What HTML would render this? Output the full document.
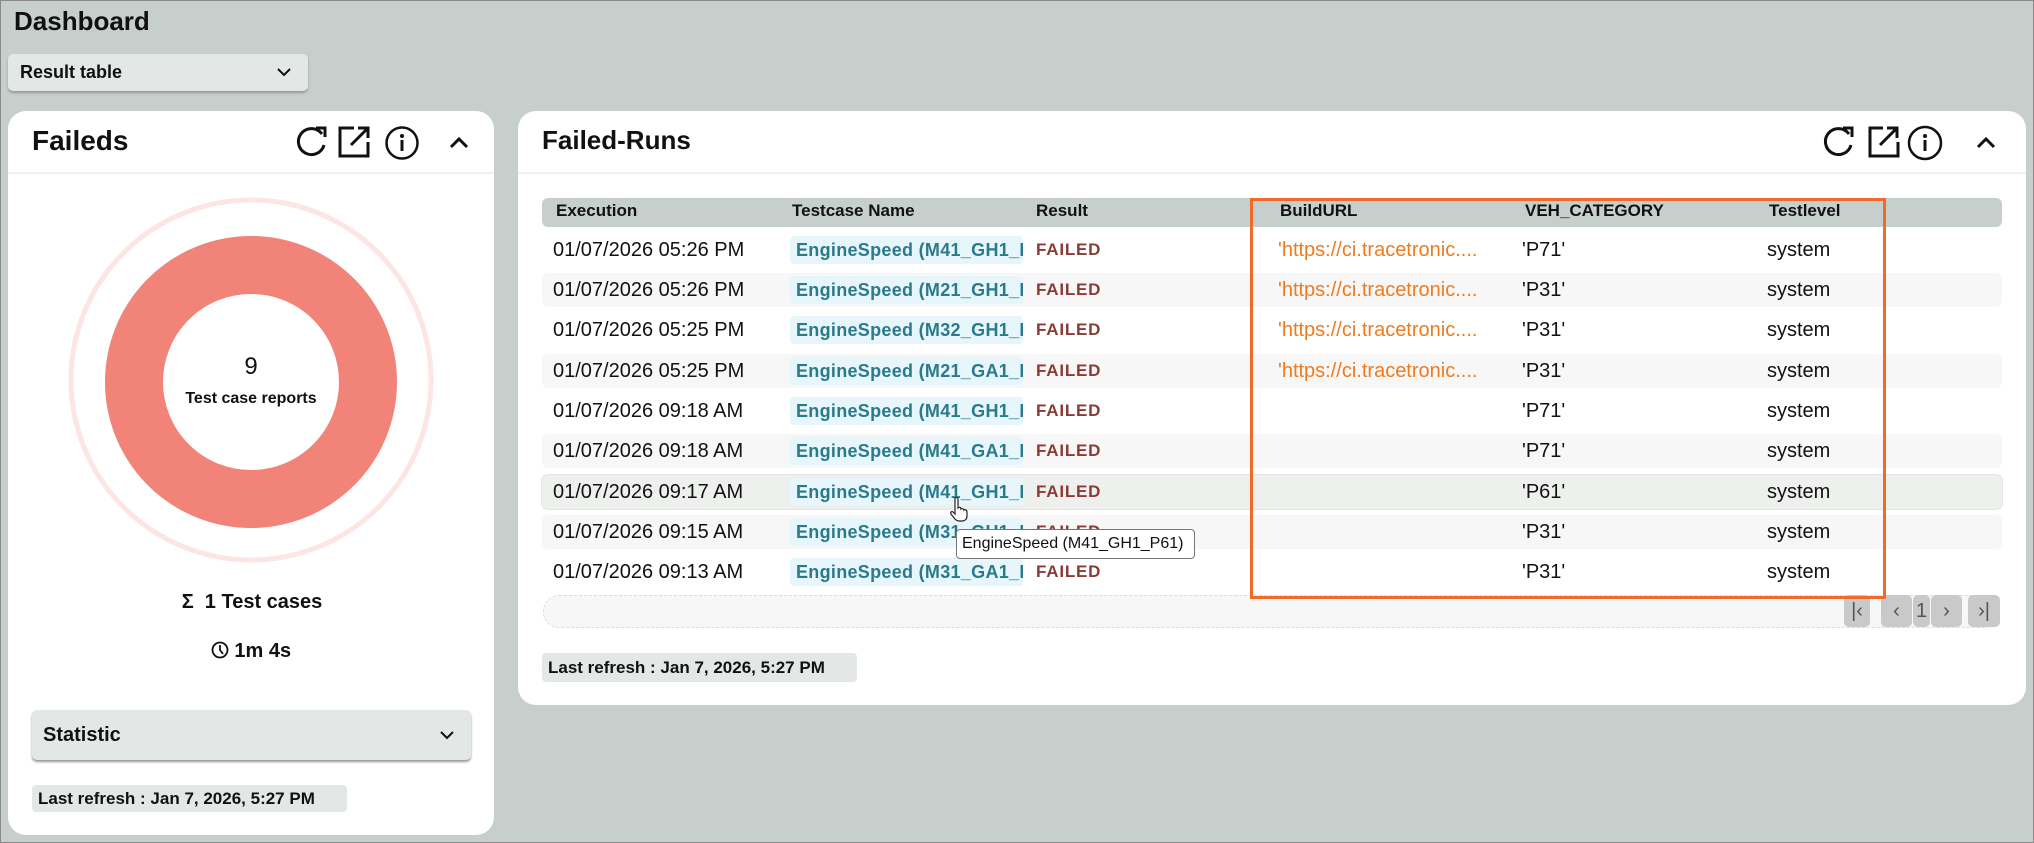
<!DOCTYPE html>
<html><head><meta charset="utf-8"><style>
*{box-sizing:border-box;margin:0;padding:0}
body{width:2034px;height:843px;background:#c6cfcb;font-family:"Liberation Sans",sans-serif;color:#111;position:relative;overflow:hidden;border:1px solid #8a8a8a}
.abs{position:absolute}
.card{position:absolute;background:#fff;border-radius:18px}
.b{font-weight:bold}
.row{position:absolute;left:541px;width:1460px;height:34px;border-radius:6px}
.cell{position:absolute;font-size:20px;white-space:nowrap;line-height:34px;top:0}
.tc{position:absolute;left:248px;top:3px;width:233px;height:28px;background:#e6f6fb;border-radius:4px;color:#2b7a8c;font-size:18px;font-weight:bold;line-height:28px;padding-left:6px;overflow:hidden;white-space:nowrap;letter-spacing:0.3px}
.fl{position:absolute;left:494px;color:#8b3b36;font-size:17px;font-weight:bold;line-height:34px;letter-spacing:0.8px}
.url{color:#ef7b1f}
.pg{position:absolute;top:594px;height:32px;background:#c9c9c9;border-radius:5px;color:#555;font-size:20px;text-align:center;line-height:32px}
</style></head><body>
<div class="abs b" style="left:13px;top:5px;font-size:26px">Dashboard</div>
<div class="abs" style="left:7px;top:53px;width:300px;height:37px;background:#e3e7e5;border-radius:5px;box-shadow:0 2px 2px #999;font-size:18px;font-weight:bold;line-height:37px;padding-left:12px">Result table
<svg class="abs" style="left:268px;top:12px" width="16" height="12" viewBox="0 0 16 12"><path d="M2 3l6 6 6-6" fill="none" stroke="#111" stroke-width="2"/></svg></div>

<div class="card" style="left:7px;top:110px;width:486px;height:724px">
<div class="abs b" style="left:24px;top:14px;font-size:28px">Faileds</div>
<svg class="abs" style="left:288px;top:14px" width="175" height="36" viewBox="0 0 175 36">
<path d="M26 9A13 13 0 1 0 28 20" fill="none" stroke="#111" stroke-width="3"/><path d="M20 3h9v9" fill="none" stroke="#111" stroke-width="3"/>
<path d="M58 3h-14v28h28v-14" fill="none" stroke="#111" stroke-width="3"/><path d="M55 20l16-16M62 3h10v10" fill="none" stroke="#111" stroke-width="3"/>
<circle cx="106" cy="18" r="15.5" fill="none" stroke="#111" stroke-width="2.5"/><circle cx="106" cy="11" r="2" fill="#111"/><path d="M106 15v11" stroke="#111" stroke-width="3"/>
<path d="M155 22l8-8 8 8" fill="none" stroke="#111" stroke-width="3"/></svg>
<div class="abs" style="left:0;top:61px;width:486px;height:2px;background:#eef2f1"></div>
<svg class="abs" style="left:60px;top:86px" width="366" height="366"><circle cx="183" cy="183" r="180" fill="none" stroke="#fce5e3" stroke-width="5"/><circle cx="183" cy="185" r="117" fill="none" stroke="#f28379" stroke-width="58"/></svg>
<div class="abs" style="left:0;width:486px;text-align:center;top:242px;font-size:24px">9</div>
<div class="abs b" style="left:0;width:486px;text-align:center;top:279px;font-size:16px">Test case reports</div>
<div class="abs b" style="left:0;width:488px;text-align:center;top:480px;font-size:20px">Σ&nbsp; 1 Test cases</div>
<div class="abs b" style="left:0;width:486px;text-align:center;top:529px;font-size:20px"><svg width="18" height="18" viewBox="0 0 18 18" style="vertical-align:-2px"><circle cx="9" cy="9" r="7.5" fill="none" stroke="#111" stroke-width="1.8"/><path d="M9 4v5l3 4" fill="none" stroke="#111" stroke-width="1.8"/></svg> 1m 4s</div>
<div class="abs" style="left:24px;top:599px;width:439px;height:50px;background:#e3e7e5;border-radius:5px;box-shadow:0 2px 2px #999;font-size:20px;font-weight:bold;line-height:50px;padding-left:11px">Statistic
<svg class="abs" style="left:407px;top:20px" width="16" height="12" viewBox="0 0 16 12"><path d="M2 2l6 6 6-6" fill="none" stroke="#111" stroke-width="2"/></svg></div>
<div class="abs b" style="left:24px;top:674px;width:315px;height:27px;background:#e3e7e5;border-radius:4px;font-size:17px;line-height:27px;padding-left:6px">Last refresh : Jan 7, 2026, 5:27 PM</div>
</div>

<div class="card" style="left:517px;top:110px;width:1508px;height:594px"></div>
<div class="abs b" style="left:541px;top:124px;font-size:26px">Failed-Runs</div>
<svg class="abs" style="left:1822px;top:124px" width="180" height="36" viewBox="0 0 180 36">
<path d="M26 9A13 13 0 1 0 28 20" fill="none" stroke="#111" stroke-width="3"/><path d="M20 3h9v9" fill="none" stroke="#111" stroke-width="3"/>
<path d="M60 3h-13v28h28v-14" fill="none" stroke="#111" stroke-width="3"/><path d="M57 20l16-16M64 3h10v10" fill="none" stroke="#111" stroke-width="3"/>
<circle cx="102" cy="18" r="16" fill="none" stroke="#111" stroke-width="2.5"/><circle cx="102" cy="11" r="2" fill="#111"/><path d="M102 15v11" stroke="#111" stroke-width="3"/>
<path d="M155 22l8-8 8 8" fill="none" stroke="#111" stroke-width="3"/></svg>
<div class="abs" style="left:517px;top:171px;width:1508px;height:2px;background:#eef2f1"></div>

<div class="abs" style="left:541px;top:197px;width:1460px;height:29px;background:#c6cfcb;border-radius:6px"></div>
<div class="abs b" style="left:555px;top:200px;font-size:17px">Execution</div>
<div class="abs b" style="left:791px;top:200px;font-size:17px">Testcase Name</div>
<div class="abs b" style="left:1035px;top:200px;font-size:17px">Result</div>
<div class="abs b" style="left:1279px;top:200px;font-size:17px">BuildURL</div>
<div class="abs b" style="left:1524px;top:200px;font-size:17px">VEH_CATEGORY</div>
<div class="abs b" style="left:1768px;top:200px;font-size:17px">Testlevel</div>

<div class="row" style="top:232px"><span class="cell" style="left:11px">01/07/2026 05:26 PM</span><div class="tc">EngineSpeed (M41_GH1_P71)</div><span class="fl">FAILED</span><span class="cell url" style="left:736px">'https://ci.tracetronic....</span><span class="cell" style="left:980px">'P71'</span><span class="cell" style="left:1225px">system</span></div>
<div class="row" style="top:272px;background:#f7f7f7"><span class="cell" style="left:11px">01/07/2026 05:26 PM</span><div class="tc">EngineSpeed (M21_GH1_P31)</div><span class="fl">FAILED</span><span class="cell url" style="left:736px">'https://ci.tracetronic....</span><span class="cell" style="left:980px">'P31'</span><span class="cell" style="left:1225px">system</span></div>
<div class="row" style="top:312px"><span class="cell" style="left:11px">01/07/2026 05:25 PM</span><div class="tc">EngineSpeed (M32_GH1_P31)</div><span class="fl">FAILED</span><span class="cell url" style="left:736px">'https://ci.tracetronic....</span><span class="cell" style="left:980px">'P31'</span><span class="cell" style="left:1225px">system</span></div>
<div class="row" style="top:353px;background:#f7f7f7"><span class="cell" style="left:11px">01/07/2026 05:25 PM</span><div class="tc">EngineSpeed (M21_GA1_P31)</div><span class="fl">FAILED</span><span class="cell url" style="left:736px">'https://ci.tracetronic....</span><span class="cell" style="left:980px">'P31'</span><span class="cell" style="left:1225px">system</span></div>
<div class="row" style="top:393px"><span class="cell" style="left:11px">01/07/2026 09:18 AM</span><div class="tc">EngineSpeed (M41_GH1_P71)</div><span class="fl">FAILED</span><span class="cell" style="left:980px">'P71'</span><span class="cell" style="left:1225px">system</span></div>
<div class="row" style="top:433px;background:#f7f7f7"><span class="cell" style="left:11px">01/07/2026 09:18 AM</span><div class="tc">EngineSpeed (M41_GA1_P71)</div><span class="fl">FAILED</span><span class="cell" style="left:980px">'P71'</span><span class="cell" style="left:1225px">system</span></div>
<div class="row" style="top:474px;background:#eef0ee;box-shadow:0 0 0 1px #e2e6e4"><span class="cell" style="left:11px">01/07/2026 09:17 AM</span><div class="tc">EngineSpeed (M41_GH1_P61)</div><span class="fl">FAILED</span><span class="cell" style="left:980px">'P61'</span><span class="cell" style="left:1225px">system</span></div>
<div class="row" style="top:514px;background:#f7f7f7"><span class="cell" style="left:11px">01/07/2026 09:15 AM</span><div class="tc">EngineSpeed (M31_GH1_P31)</div><span class="fl">FAILED</span><span class="cell" style="left:980px">'P31'</span><span class="cell" style="left:1225px">system</span></div>
<div class="row" style="top:554px"><span class="cell" style="left:11px">01/07/2026 09:13 AM</span><div class="tc">EngineSpeed (M31_GA1_P31)</div><span class="fl">FAILED</span><span class="cell" style="left:980px">'P31'</span><span class="cell" style="left:1225px">system</span></div>

<div class="abs" style="left:542px;top:594px;width:1457px;height:33px;background:#f7f7f7;border:1px dashed #ddd;border-radius:16px"></div>
<div class="pg" style="left:1843px;width:26px">|‹</div>
<div class="pg" style="left:1880px;width:31px">‹</div>
<div class="pg" style="left:1912px;width:17px">1</div>
<div class="pg" style="left:1930px;width:31px">›</div>
<div class="pg" style="left:1967px;width:32px">›|</div>

<div class="abs" style="left:1249px;top:197px;width:636px;height:401px;border:3px solid #f26a2a"></div>

<div class="abs" style="left:955px;top:528px;width:239px;height:30px;background:#fff;border:1px solid #777;border-radius:4px;font-size:16px;line-height:28px;padding-left:5px;white-space:nowrap">EngineSpeed (M41_GH1_P61)</div>
<svg class="abs" style="left:948px;top:495px" width="20" height="26" viewBox="0 0 20 26"><path d="M6 2c1-1 3 0 3 1v9c1-1 3-1 3 1 1-1 3 0 3 1 1-1 3 0 3 2v4c0 3-2 5-5 5h-3c-2 0-3-1-4-2l-4-5c-1-2 1-3 2-2l2 2V3z" fill="#fff" stroke="#222" stroke-width="1.2"/></svg>

<div class="abs b" style="left:541px;top:652px;width:315px;height:29px;background:#e3e7e5;border-radius:4px;font-size:17px;line-height:29px;padding-left:6px">Last refresh : Jan 7, 2026, 5:27 PM</div>
</body></html>
